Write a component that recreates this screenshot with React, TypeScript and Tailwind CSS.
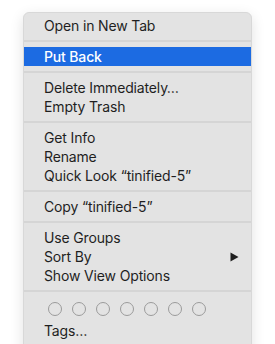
const groups: { label: string; active?: boolean; submenu?: boolean }[][] = [
  [{ label: "Open in New Tab" }],
  [{ label: "Put Back", active: true }],
  [{ label: "Delete Immediately…" }, { label: "Empty Trash" }],
  [{ label: "Get Info" }, { label: "Rename" }, { label: "Quick Look “tinified-5”" }],
  [{ label: "Copy “tinified-5”" }],
  [{ label: "Use Groups" }, { label: "Sort By", submenu: true }, { label: "Show View Options" }],
];

const Separator = () => (
  <div className="flex h-[12px] items-center">
    <div className="h-[2px] w-full bg-[#d5d5d5]" />
  </div>
);

const MenuRow = ({
  label,
  active,
  submenu,
}: {
  label: string;
  active?: boolean;
  submenu?: boolean;
}) => (
  <div
    className={`flex h-[19px] items-center justify-between pl-[20px] pr-[12px] text-[14px] leading-none tracking-[-0.15px] ${
      active ? "bg-[#1c6be2] font-medium text-white" : "text-[#1f1f1f]"
    }`}
  >
    <span>{label}</span>
    {submenu && (
      <svg width="9" height="10" viewBox="0 0 9 10">
        <path d="M0.5 0.5 L8.5 5 L0.5 9.5 Z" fill="#1f1f1f" />
      </svg>
    )}
  </div>
);

export default function App() {
  return (
    <div
      className="h-[344px] w-[275px] overflow-hidden bg-white pl-[23px] pt-[12px]"
      style={{ fontFamily: "Inter, 'Liberation Sans', sans-serif" }}
    >
      <div className="h-[360px] w-[229px] rounded-[6px] border border-[#d8d8d8] bg-[#e3e3e3] pt-[3px] shadow-[0_4px_14px_rgba(0,0,0,0.12)]">
        {groups.map((group, i) => (
          <div key={i}>
            {i > 0 && <Separator />}
            {group.map((item) => (
              <MenuRow key={item.label} {...item} />
            ))}
          </div>
        ))}
        <Separator />
        <div className="flex h-[24px] items-center gap-[10px] pl-[24px]">
          {Array.from({ length: 7 }).map((_, i) => (
            <div
              key={i}
              className="h-[14px] w-[14px] rounded-full border border-[#9b9b9b]"
            />
          ))}
        </div>
        <MenuRow label="Tags…" />
      </div>
    </div>
  );
}
